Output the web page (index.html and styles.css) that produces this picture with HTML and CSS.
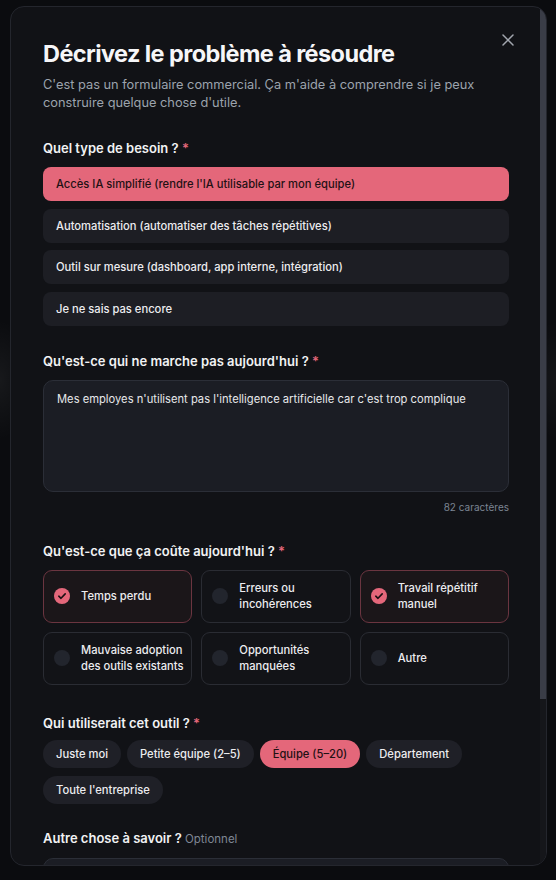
FILE: index.html
```html
<!DOCTYPE html>
<html lang="fr">
<head>
    <meta charset="UTF-8">
    <meta name="viewport" content="width=device-width, initial-scale=1.0">
    <title>Décrivez le problème</title>
    <link rel="stylesheet" href="styles.css">
</head>
<body>
    <div class="backdrop">
        <div class="modal">
            <div class="modal-body">
                <button class="close" aria-label="Fermer">
                    <svg width="12" height="12" viewBox="0 0 12 12"><path d="M1 1L11 11M11 1L1 11" stroke="currentColor" stroke-width="1.5" stroke-linecap="round"/></svg>
                </button>

                <h1 class="title">Décrivez le problème à résoudre</h1>
                <p class="subtitle">C'est pas un formulaire commercial. Ça m'aide à comprendre si je peux construire quelque chose d'utile.</p>

                <div class="field">
                    <div class="label">Quel type de besoin ? <span class="req">*</span></div>
                    <div class="options">
                        <button class="option selected">Accès IA simplifié (rendre l'IA utilisable par mon équipe)</button>
                        <button class="option">Automatisation (automatiser des tâches répétitives)</button>
                        <button class="option">Outil sur mesure (dashboard, app interne, intégration)</button>
                        <button class="option">Je ne sais pas encore</button>
                    </div>
                </div>

                <div class="field">
                    <div class="label">Qu'est-ce qui ne marche pas aujourd'hui ? <span class="req">*</span></div>
                    <textarea class="textarea">Mes employes n'utilisent pas l'intelligence artificielle car c'est trop complique</textarea>
                    <div class="count">82 caractères</div>
                </div>

                <div class="field">
                    <div class="label">Qu'est-ce que ça coûte aujourd'hui ? <span class="req">*</span></div>
                    <div class="costs">
                        <label class="cost checked">
                            <span class="check"><svg width="16" height="16" viewBox="0 0 16 16"><circle cx="8" cy="8" r="8" fill="#e4677a"/><path d="M4.8 8.2L7 10.3L11.2 5.9" fill="none" stroke="#1a1012" stroke-width="1.6" stroke-linecap="round" stroke-linejoin="round"/></svg></span>
                            <span>Temps perdu</span>
                        </label>
                        <label class="cost">
                            <span class="check"></span>
                            <span>Erreurs ou incohérences</span>
                        </label>
                        <label class="cost checked">
                            <span class="check"><svg width="16" height="16" viewBox="0 0 16 16"><circle cx="8" cy="8" r="8" fill="#e4677a"/><path d="M4.8 8.2L7 10.3L11.2 5.9" fill="none" stroke="#1a1012" stroke-width="1.6" stroke-linecap="round" stroke-linejoin="round"/></svg></span>
                            <span>Travail répétitif manuel</span>
                        </label>
                        <label class="cost">
                            <span class="check"></span>
                            <span>Mauvaise adoption des outils existants</span>
                        </label>
                        <label class="cost">
                            <span class="check"></span>
                            <span>Opportunités manquées</span>
                        </label>
                        <label class="cost">
                            <span class="check"></span>
                            <span>Autre</span>
                        </label>
                    </div>
                </div>

                <div class="field">
                    <div class="label">Qui utiliserait cet outil ? <span class="req">*</span></div>
                    <div class="pills">
                        <button class="pill">Juste moi</button>
                        <button class="pill">Petite équipe (2–5)</button>
                        <button class="pill selected">Équipe (5–20)</button>
                        <button class="pill">Département</button>
                        <button class="pill">Toute l'entreprise</button>
                    </div>
                </div>

                <div class="field">
                    <div class="label">Autre chose à savoir ? <span class="optional">Optionnel</span></div>
                    <textarea class="textarea small"></textarea>
                </div>
            </div>
            <div class="scrollbar"><div class="thumb"></div></div>
        </div>
    </div>
</body>
</html>
```

FILE: styles.css
```css
* {
    box-sizing: border-box;
}
body {
    margin: 0;
    height: 880px;
    overflow: hidden;
    background: #0b0c0f;
    font-family: Inter, "Noto Sans", sans-serif;
    color: #ececef;
}
.backdrop {
    height: 100%;
    padding: 6px 0 0 10px;
    background:
        radial-gradient(ellipse 30px 60px at 0 380px, rgba(255,255,255,0.05), transparent),
        radial-gradient(ellipse 30px 60px at 556px 380px, rgba(255,255,255,0.04), transparent);
}
.modal {
    display: flex;
    width: 537px;
    height: 860px;
    overflow: hidden;
    background: #111216;
    border: 1px solid #24262d;
    border-radius: 14px;
}
.modal-body {
    position: relative;
    flex: 1;
    min-width: 0;
    overflow: hidden;
    padding: 31px 31px 40px 32px;
}
/* faux ascenseur, la barre native est masquée en headless */
.scrollbar {
    flex: none;
    width: 6px;
    background: #15161a;
}
.thumb {
    height: 692px;
    background: #3a3d47;
}
.close {
    position: absolute;
    top: 23px;
    right: 22px;
    width: 20px;
    height: 20px;
    padding: 4px;
    border: none;
    background: none;
    color: #a2a6ae;
    cursor: pointer;
}
.title {
    margin: 0;
    font-size: 23.5px;
    line-height: 32px;
    font-weight: 700;
    letter-spacing: -0.025em;
    color: #f6f6f8;
}
.subtitle {
    margin: 6px 0 0;
    font-size: 12.8px;
    line-height: 18px;
    color: #9ca3ad;
}
.field {
    margin-top: 27px;
}
.field + .field {
    margin-top: 26px;
}
.label {
    font-size: 13px;
    line-height: 18px;
    font-weight: 600;
    color: #f2f2f4;
    margin-bottom: 10px;
}
.req {
    color: #e4677a;
}
.optional {
    font-size: 11.5px;
    font-weight: 400;
    color: #7f8794;
}
.options {
    display: flex;
    flex-direction: column;
    gap: 7.5px;
}
.option {
    height: 34px;
    padding: 0 13px;
    text-align: left;
    border: none;
    border-radius: 8px;
    background: #1d1e24;
    color: #ececef;
    font-family: inherit;
    font-size: 11.2px;
    font-weight: 500;
    cursor: pointer;
}
.option.selected {
    background: #e4677a;
    color: #1f1114;
}
.textarea {
    display: block;
    width: 100%;
    height: 112px;
    resize: none;
    padding: 10px 13px;
    border: 1px solid #2b2e37;
    border-radius: 10px;
    background: #1b1d24;
    color: #e7e8eb;
    font-family: inherit;
    font-size: 11.2px;
    line-height: 16px;
}
.textarea.small {
    height: 90px;
}
.count {
    margin-top: 9px;
    padding-bottom: 3px;
    text-align: right;
    font-size: 10px;
    color: #7c8593;
}
.costs {
    display: grid;
    grid-template-columns: repeat(3, 1fr);
    gap: 9px;
    padding-bottom: 3px;
}
.cost {
    display: flex;
    align-items: center;
    gap: 11px;
    height: 53px;
    padding: 0 6px 0 10px;
    border: 1px solid #2a2c33;
    border-radius: 9px;
    background: #121317;
    font-size: 11.2px;
    line-height: 16px;
    font-weight: 500;
    color: #ececef;
    cursor: pointer;
}
.cost.checked {
    background: #1b1619;
    border-color: #6b3540;
}
.check {
    flex: none;
    width: 16px;
    height: 16px;
    border-radius: 50%;
    background: #22252d;
}
.check svg {
    display: block;
}
.pills {
    display: flex;
    flex-wrap: wrap;
    gap: 8px 6px;
    margin: -2px 0 -1px;
}
.pill {
    height: 28px;
    padding: 0 13px;
    border: none;
    border-radius: 999px;
    background: #1f2027;
    color: #ececef;
    font-family: inherit;
    font-size: 11.2px;
    font-weight: 500;
    cursor: pointer;
}
.pill.selected {
    background: #e4677a;
    color: #1f1114;
}
```
